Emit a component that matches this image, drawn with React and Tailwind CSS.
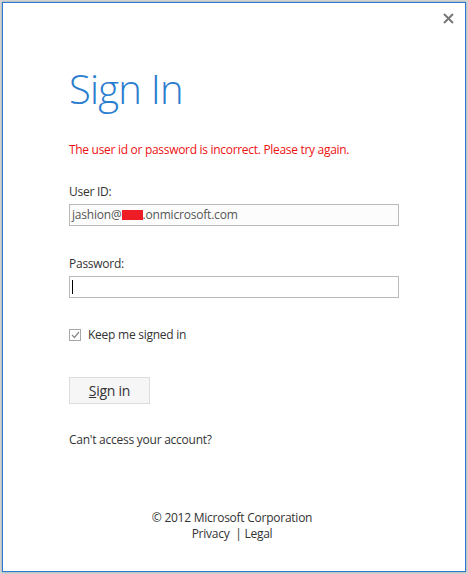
import { useState } from 'react';

export default function App() {
    const [keepSignedIn, setKeepSignedIn] = useState(true);

    return (
        <div className="flex h-[574px] w-[468px] bg-[#d6d6d6] p-[2px] font-['Open_Sans',sans-serif]">
            <div className="relative flex flex-1 flex-col border border-[#2b7bd1] bg-white shadow-[0_0_2px_rgba(0,0,0,0.3)]">
                <button className="absolute right-[10px] top-[8px] flex h-[14px] w-[14px] items-center justify-center text-[#777]">
                    <svg width="11" height="11" viewBox="0 0 11 11">
                        <path d="M1 1L10 10M10 1L1 10" stroke="currentColor" strokeWidth="2" />
                    </svg>
                </button>

                <div className="flex flex-1 flex-col pl-[66px] pr-[66px] tracking-[-0.25px]">
                    <h1 className="mt-[58px] text-[40px] font-light leading-[56px] tracking-[-0.8px] text-[#2a7dcf]">
                        Sign In
                    </h1>

                    <p className="mt-[25px] text-[12px] leading-[16px] tracking-[-0.3px] text-[#ee1111]">
                        The user id or password is incorrect. Please try again.
                    </p>

                    <label className="mt-[26px] text-[12px] leading-[16px] text-[#333]">User ID:</label>
                    <div className="mt-[4px] flex h-[22px] w-[330px] items-center border border-[#b9b9b9] bg-[#fcfcfc] px-[2px] text-[12px] tracking-[-0.2px] text-[#555]">
                        jashion@
                        <span className="inline-block h-[10px] w-[21px] bg-[#ee1c24]" />
                        .onmicrosoft.com
                    </div>

                    <label className="mt-[30px] text-[12px] leading-[16px] text-[#333]">Password:</label>
                    <div className="mt-[4px] flex h-[22px] w-[330px] items-center border border-[#b9b9b9] bg-white px-[2px]">
                        <span className="h-[14px] w-px bg-black" />
                    </div>

                    <label className="mt-[29px] flex items-center gap-[7px] text-[12px] leading-[16px] text-[#333]">
                        <span
                            onClick={() => setKeepSignedIn(!keepSignedIn)}
                            className="flex h-[12px] w-[12px] items-center justify-center border border-[#a9a9a9] bg-white"
                        >
                            {keepSignedIn && (
                                <svg width="9" height="8" viewBox="0 0 9 8">
                                    <path d="M1 4L3.5 6.5L8 1" fill="none" stroke="#888" strokeWidth="1.2" />
                                </svg>
                            )}
                        </span>
                        Keep me signed in
                    </label>

                    <button className="mt-[34px] flex h-[27px] w-[81px] items-center justify-center border border-[#dcdcdc] bg-[#f6f6f6] text-[14px] text-[#333]">
                        <span><span className="underline">S</span>ign in</span>
                    </button>

                    <a className="mt-[28px] text-[12px] leading-[16px] text-[#333]">Can't access your account?</a>

                    <div className="mt-auto mb-[29px] flex flex-col items-center pr-[4px] text-[12px] leading-[16px] text-[#333]">
                        <span>© 2012 Microsoft Corporation</span>
                        <span>Privacy &nbsp;| Legal</span>
                    </div>
                </div>
            </div>
        </div>
    );
}
